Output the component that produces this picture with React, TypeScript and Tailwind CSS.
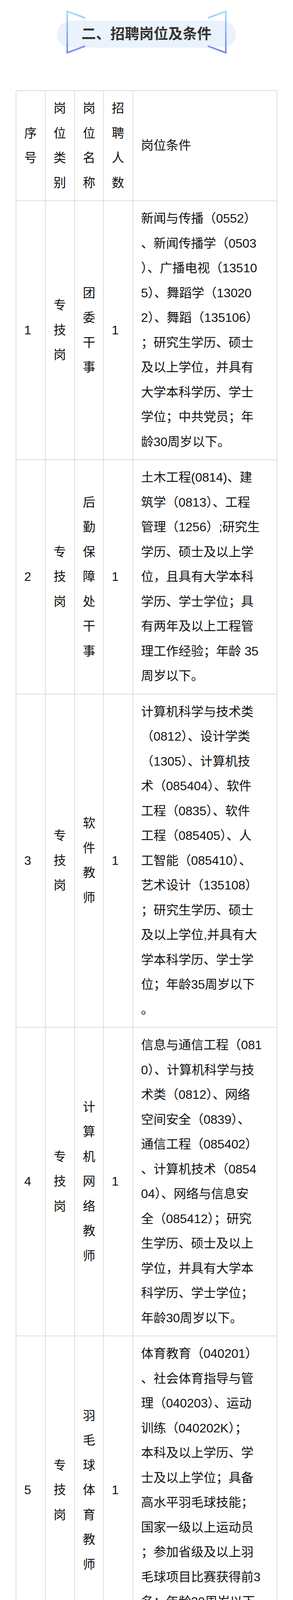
import * as React from "react";

interface JobRow {
  no: string;
  type: string;
  name: string;
  count: string;
  lines: string[];
}

const rows: JobRow[] = [
  {
    no: "1",
    type: "专技岗",
    name: "团委干事",
    count: "1",
    lines: [
      "新闻与传播（0552）",
      "、新闻传播学（0503",
      "）、广播电视（13510",
      "5）、舞蹈学（13020",
      "2）、舞蹈（135106）",
      "；研究生学历、硕士",
      "及以上学位，并具有",
      "大学本科学历、学士",
      "学位；中共党员；年",
      "龄30周岁以下。",
    ],
  },
  {
    no: "2",
    type: "专技岗",
    name: "后勤保障处干事",
    count: "1",
    lines: [
      "土木工程(0814)、建",
      "筑学（0813）、工程",
      "管理（1256）;研究生",
      "学历、硕士及以上学",
      "位，且具有大学本科",
      "学历、学士学位；具",
      "有两年及以上工程管",
      "理工作经验；年龄 35",
      "周岁以下。",
    ],
  },
  {
    no: "3",
    type: "专技岗",
    name: "软件教师",
    count: "1",
    lines: [
      "计算机科学与技术类",
      "（0812）、设计学类",
      "（1305）、计算机技",
      "术（085404）、软件",
      "工程（0835）、软件",
      "工程（085405）、人",
      "工智能（085410）、",
      "艺术设计（135108）",
      "；研究生学历、硕士",
      "及以上学位,并具有大",
      "学本科学历、学士学",
      "位；年龄35周岁以下",
      "。",
    ],
  },
  {
    no: "4",
    type: "专技岗",
    name: "计算机网络教师",
    count: "1",
    lines: [
      "信息与通信工程（081",
      "0）、计算机科学与技",
      "术类（0812）、网络",
      "空间安全（0839）、",
      "通信工程（085402）",
      "、计算机技术（0854",
      "04）、网络与信息安",
      "全（085412）；研究",
      "生学历、硕士及以上",
      "学位，并具有大学本",
      "科学历、学士学位；",
      "年龄30周岁以下。",
    ],
  },
  {
    no: "5",
    type: "专技岗",
    name: "羽毛球体育教师",
    count: "1",
    lines: [
      "体育教育（040201）",
      "、社会体育指导与管",
      "理（040203）、运动",
      "训练（040202K）；",
      "本科及以上学历、学",
      "士及以上学位；具备",
      "高水平羽毛球技能；",
      "国家一级以上运动员",
      "；参加省级及以上羽",
      "毛球项目比赛获得前3",
      "名；年龄30周岁以下",
      "。",
    ],
  },
  {
    no: "6",
    type: "专技岗",
    name: "篮球体育教师",
    count: "1",
    lines: [
      "体育教育（040201）",
      "、社会体育指导与管",
      "理（040203）、运动",
      "训练（040202K）；",
      "本科及以上学历、学",
      "士及以上学位；具备",
      "高水平篮球技能；国",
      "际一级以上运动员；",
      "参加省级及以上篮球",
      "项目比赛获得前3名；",
      "年龄30周岁以下。",
    ],
  },
  {
    no: "7",
    type: "专技岗",
    name: "科研助理",
    count: "1",
    lines: [
      "大气科学（0706）、",
      "应用统计（0252）、",
      "工商管理（1251）、",
      "工商管理（1202）；",
      "研究生学历、硕士及",
      "以上学位，并具有大",
      "学本科学历、学士学",
      "位；年龄30周岁以下",
      "。",
    ],
  },
];

const cellCls =
  "border-2 border-[#dedede] px-[20px] py-[13px] align-middle text-left";

// one character per line, as in the narrow columns
function Stack({ text }: { text: string }) {
  return (
    <>
      {Array.from(text).map((ch, i) => (
        <div key={i}>{ch}</div>
      ))}
    </>
  );
}

function Lines({ lines }: { lines: string[] }) {
  return (
    <>
      {lines.map((l, i) => (
        <div key={i} className="whitespace-nowrap">
          {l}
        </div>
      ))}
    </>
  );
}

function TitleBanner() {
  return (
    <div className="relative mx-auto h-[110px] w-[458px] pt-[26px]">
      <div className="flex h-[69px] items-center justify-center rounded-full bg-[#eaf2fb]">
        <span className="text-[37px] font-semibold leading-none text-[#333333]">
          二、招聘岗位及条件
        </span>
      </div>
      {/* bracket decoration */}
      <svg
        className="absolute left-0 top-0"
        width="458"
        height="110"
        viewBox="0 0 458 110"
        fill="none"
      >
        <defs>
          <linearGradient id="brk" x1="0" y1="0" x2="0" y2="1">
            <stop offset="0" stopColor="#a6dcf7" />
            <stop offset="1" stopColor="#7489f2" />
          </linearGradient>
        </defs>
        <path
          d="M72 19 L26 2 L26 108 L72 91"
          stroke="url(#brk)"
          strokeWidth="4"
          strokeLinejoin="miter"
        />
        <path
          d="M386 19 L432 2 L432 108 L386 91"
          stroke="url(#brk)"
          strokeWidth="4"
          strokeLinejoin="miter"
        />
      </svg>
    </div>
  );
}

export default function App() {
  return (
    <div className="w-[750px] bg-white pt-[27px] font-['Liberation_Sans','Noto_Sans_CJK_SC',sans-serif]">
      <TitleBanner />

      <table className="mx-auto mt-[94px] w-[668px] table-fixed border-collapse text-[32px] leading-[63.5px] text-[#111111]">
        <colgroup>
          <col className="w-[75px]" />
          <col className="w-[75px]" />
          <col className="w-[74px]" />
          <col className="w-[75px]" />
          <col className="w-[369px]" />
        </colgroup>
        <tbody>
          <tr>
            <td className={cellCls}>
              <Stack text="序号" />
            </td>
            <td className={cellCls}>
              <Stack text="岗位类别" />
            </td>
            <td className={cellCls}>
              <Stack text="岗位名称" />
            </td>
            <td className={cellCls}>
              <Stack text="招聘人数" />
            </td>
            <td className={cellCls}>岗位条件</td>
          </tr>
          {rows.map((r) => (
            <tr key={r.no}>
              <td className={cellCls}>{r.no}</td>
              <td className={cellCls}>
                <Stack text={r.type} />
              </td>
              <td className={cellCls}>
                <Stack text={r.name} />
              </td>
              <td className={cellCls}>{r.count}</td>
              <td className={cellCls}>
                <Lines lines={r.lines} />
              </td>
            </tr>
          ))}
        </tbody>
      </table>
    </div>
  );
}
